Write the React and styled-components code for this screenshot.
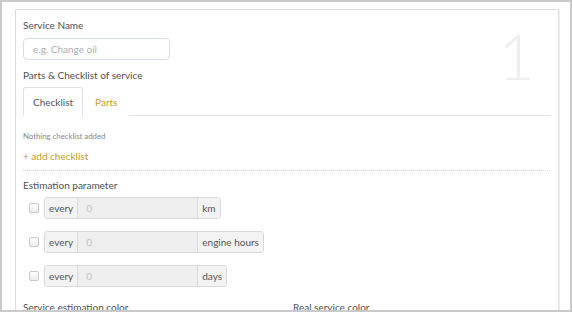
import React from "react";
import styled, { createGlobalStyle } from "styled-components";

const GlobalStyle = createGlobalStyle`
  html, body { margin: 0; padding: 0; background: #fff; }
  body { font-family: Lato, "Open Sans", sans-serif; color: #333; }
  * { box-sizing: border-box; }
`;

const Frame = styled.div`
  width: 572px;
  height: 312px;
  overflow: hidden;
  border: 2px solid #c9c9c9;
  padding: 7px 11px 0 13px;
  background: #fff;
`;

const Panel = styled.div`
  position: relative;
  border: 1px solid #dedede;
  box-shadow: 2px 0 0 -1px #efefef;
  padding: 8px 8px 20px 7px;
  min-height: 340px;
`;

const StepNumber = styled.div`
  position: absolute;
  top: 14px;
  right: 23px;
  font-size: 64px;
  font-weight: 300;
  color: #efefef;
  line-height: 1;
`;

const Label = styled.div`
  font-size: 10px;
  color: #505050;
  line-height: 14px;
  margin: ${(p) => p.$m || "0"};
`;

const TextInput = styled.input`
  display: block;
  width: 147px;
  height: 22px;
  margin: 6px 0 8px;
  border: 1px solid #d3e0e8;
  border-radius: 4px;
  padding: 0 9px;
  font-family: inherit;
  font-size: 10px;
  color: #333;
  &::placeholder { color: #b0b0b0; }
  &:focus { outline: none; }
`;

const Tabs = styled.div`
  display: flex;
  margin-top: 5px;
  border-bottom: 1px solid #e2e2e2;
`;

const Tab = styled.div`
  height: 29px;
  margin-bottom: -1px;
  padding: 0 ${(p) => (p.$active ? "9px" : "11px")};
  display: flex;
  align-items: center;
  font-size: 10px;
  color: ${(p) => (p.$active ? "#555" : "#c69c2a")};
  background: #fff;
  border: 1px solid ${(p) => (p.$active ? "#e2e2e2" : "transparent")};
  border-bottom-color: ${(p) => (p.$active ? "#fff" : "transparent")};
  border-radius: 3px 3px 0 0;
`;

const Muted = styled.div`
  font-size: 7.8px;
  color: #888;
  margin-top: 15px;
  line-height: 10px;
`;

const AddLink = styled.div`
  font-size: 10px;
  color: #c69c2a;
  margin-top: 8px;
  line-height: 14px;
  padding-bottom: 7px;
  border-bottom: 1px dotted #d8d8d8;
`;

const Row = styled.div`
  display: flex;
  align-items: center;
  height: 22px;
  margin: ${(p) => p.$m || "12px 0 0"};
  padding-left: 6px;
`;

const Check = styled.span`
  width: 10px;
  height: 10px;
  border: 1px solid #c8c8c8;
  border-radius: 2px;
  background: linear-gradient(#fff, #ececec);
  margin-right: 5px;
`;

const Group = styled.div`
  display: flex;
  height: 22px;
  border: 1px solid #d9d9d9;
  border-radius: 3px;
  overflow: hidden;
`;

const Addon = styled.div`
  display: flex;
  align-items: center;
  padding: 0 4px;
  font-size: 10px;
  color: #555;
  background: #f3f3f3;
  border-${(p) => p.$side}: 1px solid #d9d9d9;
`;

const Field = styled.div`
  width: 119px;
  display: flex;
  align-items: center;
  padding: 0 8px;
  font-size: 10px;
  color: #c4c4c4;
  background: #efefef;
`;

const ColorRow = styled.div`
  display: grid;
  grid-template-columns: 270px 1fr;
  margin-top: 13px;
`;

const params = ["km", "engine hours", "days"];

export default function App() {
  return (
    <Frame>
      <GlobalStyle />
      <Panel>
        <StepNumber>1</StepNumber>
        <Label>Service Name</Label>
        <TextInput placeholder="e.g. Change oil" />
        <Label>Parts &amp; Checklist of service</Label>
        <Tabs>
          <Tab $active>Checklist</Tab>
          <Tab>Parts</Tab>
        </Tabs>
        <Muted>Nothing checklist added</Muted>
        <AddLink>+ add checklist</AddLink>
        <Label $m="7px 0 0">Estimation parameter</Label>
        {params.map((unit, i) => (
          <Row key={unit} $m={i === 0 ? "5px 0 0" : "12px 0 0"}>
            <Check />
            <Group>
              <Addon $side="right">every</Addon>
              <Field>0</Field>
              <Addon $side="left">{unit}</Addon>
            </Group>
          </Row>
        ))}
        <ColorRow>
          <Label>Service estimation color</Label>
          <Label>Real service color</Label>
        </ColorRow>
      </Panel>
    </Frame>
  );
}
